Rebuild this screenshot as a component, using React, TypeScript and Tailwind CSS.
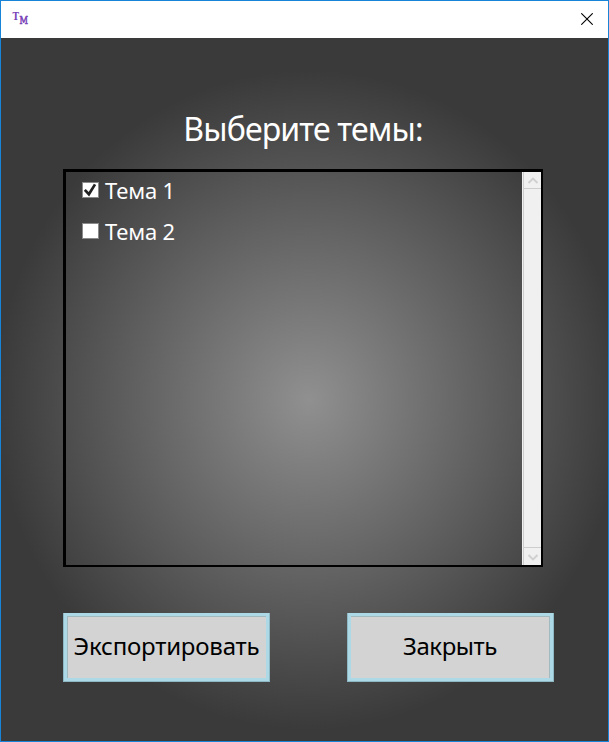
import type { ReactNode } from "react";

const uiFont = "font-['Noto_Sans','Open_Sans',sans-serif]";

function TitleBar() {
  return (
    <header className="flex h-[37px] shrink-0 items-start justify-between bg-white">
      <svg className="ml-[11px] mt-[8px] h-[18px] w-[20px]" viewBox="0 0 20 18" fill="#7a45b8" fontFamily="DejaVu Serif, serif" fontWeight="700">
        <text x="0.5" y="11" fontSize="11" textLength="6.5" lengthAdjust="spacingAndGlyphs">T</text>
        <text x="7.5" y="15" fontSize="10.5" textLength="8.5" lengthAdjust="spacingAndGlyphs" fontWeight="400" stroke="#7a45b8" strokeWidth="0.6">M</text>
      </svg>
      <button aria-label="Закрыть окно" className="mr-[15px] mt-[12px]">
        <svg className="block size-[12px]" viewBox="0 0 12 12" stroke="#000" strokeWidth="1.1">
          <path d="M0.3 0.3 11.7 11.7M11.7 0.3 0.3 11.7" />
        </svg>
      </button>
    </header>
  );
}

function ThemeRow({ label, checked }: { label: string; checked: boolean }) {
  return (
    <li className="flex h-[41px] items-start">
      <span className="mt-[10px] flex h-[16px] w-[17px] items-center justify-center border border-[#8a8a8a] bg-white">
        {checked && (
          <svg className="h-[14px] w-[15px]" viewBox="0 0 15 14" fill="none" stroke="#212121" strokeWidth="2.7">
            <path d="M1.8 6.8 5.9 11.2 12 1.4" />
          </svg>
        )}
      </span>
      <span className="ml-[6px] mt-[3px] text-[22px] leading-[30px] tracking-[-0.15px] text-white">{label}</span>
    </li>
  );
}

function ScrollArrow({ up }: { up?: boolean }) {
  return (
    <span className={`flex items-center justify-center border-l border-[#cdcdcd] ${up ? "h-[16px]" : "h-[17px] pt-[2px]"}`}>
      <svg className="h-[7px] w-[10px]" viewBox="0 0 10 7" fill="none" stroke="#d0d0d0" strokeWidth="2">
        <path d={up ? "M0.5 6 5 1.6 9.5 6" : "M0.5 1 5 5.4 9.5 1"} />
      </svg>
    </span>
  );
}

function DialogButton({ children, inset, tracking }: { children: ReactNode; inset: string; tracking: string }) {
  return (
    <button className="h-[69px] w-[207px] border-x border-b border-[#8fb8c5] bg-[#d3d3d3] text-black">
      <span className="block h-full border-[3px] border-[#add8e6]">
        <span className={`flex h-full items-center justify-center border-[#a3b9c0] pb-[3px] text-[24px] leading-[32px] ${inset} ${tracking}`}>
          {children}
        </span>
      </span>
    </button>
  );
}

export default function App() {
  return (
    <div className={`flex h-[742px] w-[609px] flex-col overflow-hidden border border-[#1883d7] ${uiFont}`}>
      <TitleBar />
      <main className="flex flex-1 flex-col bg-[radial-gradient(314px_330px_at_308px_362px,#909090,#3a3a3a)] pl-[62px]">
        <h1 className="mt-[69px] w-[480px] text-center text-[32px] leading-[44px] tracking-[-0.85px] text-white">Выберите темы:</h1>
        <section className="mt-[18px] flex h-[398px] w-[480px] border-t-[3px] border-r-2 border-b-2 border-l-[3px] border-black">
          <ul className="flex-1 pl-[16px]">
            <ThemeRow label="Тема 1" checked />
            <ThemeRow label="Тема 2" checked={false} />
          </ul>
          <div className="flex w-[19px] flex-col bg-[#f0f0f0] pl-px">
            <ScrollArrow up />
            <div className="flex-1 border-y border-l border-[#cdcdcd]" />
            <ScrollArrow />
          </div>
        </section>
        <footer className="mt-[46px] flex gap-[77px]">
          <DialogButton inset="border-t border-l pr-[1px]" tracking="tracking-[-0.2px]">Экспортировать</DialogButton>
          <DialogButton inset="border-t border-r" tracking="tracking-[-0.45px]">Закрыть</DialogButton>
        </footer>
      </main>
    </div>
  );
}
